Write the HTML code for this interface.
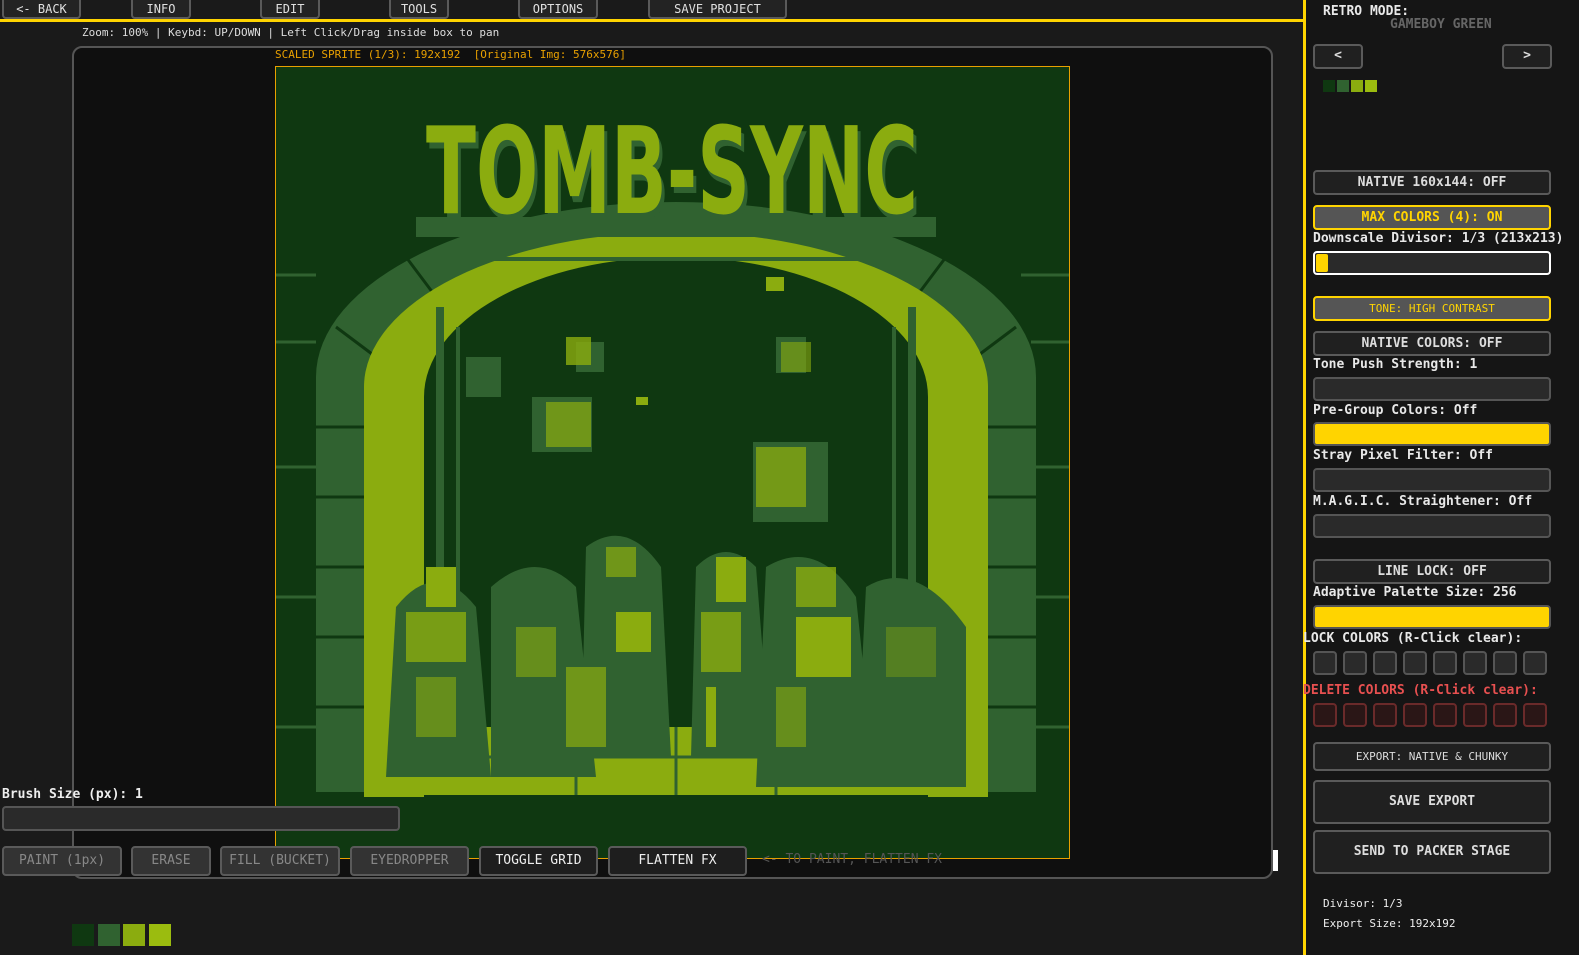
<!DOCTYPE html>
<html><head><meta charset="utf-8"><style>
*{box-sizing:border-box;margin:0;padding:0}
body{width:1579px;height:955px;background:#1a1a1a;position:relative;overflow:hidden;font-family:"DejaVu Sans Mono","Liberation Mono",monospace;color:#ddd}
.a{position:absolute}
.tb{position:absolute;top:-4px;height:23px;background:#232323;border:2px solid #5a5a5a;border-radius:4px;color:#e0e0e0;font-size:12px;text-align:center;line-height:21px;padding-top:1px}
.btn{position:absolute;left:1313px;width:238px;background:#202020;border:2px solid #5a5a5a;border-radius:4px;color:#ddd;font-size:13px;font-weight:bold;text-align:center}
.bar{position:absolute;left:1313px;width:238px;height:24px;background:#2a2a2a;border:2px solid #555;border-radius:4px}
.yb{background:#ffd400;border-color:#555}
.lbl{position:absolute;left:1313px;font-size:13px;font-weight:bold;color:#e8e8e8;white-space:nowrap}
.sq{position:absolute;width:24px;height:24px;border:2px solid #555;background:#2a2a2a;border-radius:4px}
.rq{border-color:#6a2a2a;background:#2a1616}
.lb{position:absolute;top:846px;height:30px;background:#333;border:2px solid #5a5a5a;border-radius:4px;color:#888;font-size:13px;text-align:center;line-height:26px}
</style></head><body>
<div class="tb" style="left:2px;width:79px">&lt;- BACK</div>
<div class="tb" style="left:131px;width:60px">INFO</div>
<div class="tb" style="left:260px;width:60px">EDIT</div>
<div class="tb" style="left:389px;width:60px">TOOLS</div>
<div class="tb" style="left:518px;width:80px">OPTIONS</div>
<div class="tb" style="left:648px;width:139px">SAVE PROJECT</div>
<div class="a" style="left:0;top:19px;width:1304px;height:3px;background:#ffd400"></div>
<div class="a" style="left:82px;top:26px;font-size:11px;color:#ddd;white-space:nowrap">Zoom: 100% | Keybd: UP/DOWN | Left Click/Drag inside box to pan</div>
<div class="a" style="left:72px;top:46px;width:1201px;height:833px;background:#0f0f0f;border:2px solid #555;border-radius:10px"></div>
<div class="a" style="left:275px;top:48px;font-size:11px;color:#e8a000;white-space:nowrap">SCALED SPRITE (1/3): 192x192&nbsp;&nbsp;[Original Img: 576x576]</div>
<div class="a" style="left:275px;top:66px;width:795px;height:793px;background:#0f3811;border:1px solid #e8a000;overflow:hidden">
<svg width="793" height="791" viewBox="0 0 793 791" style="position:absolute;left:0;top:0">
<g stroke="#306230" stroke-width="3">
<line x1="0" y1="208" x2="40" y2="208"/><line x1="0" y1="275" x2="40" y2="275"/><line x1="0" y1="400" x2="40" y2="400"/><line x1="0" y1="530" x2="40" y2="530"/><line x1="0" y1="660" x2="40" y2="660"/>
<line x1="745" y1="208" x2="793" y2="208"/><line x1="755" y1="275" x2="793" y2="275"/><line x1="760" y1="400" x2="793" y2="400"/><line x1="760" y1="530" x2="793" y2="530"/><line x1="760" y1="660" x2="793" y2="660"/>
</g>
<path d="M40,725 L40,310 A360,175 0 0 1 760,310 L760,725 Z" fill="#306230"/>
<g stroke="#0f3811" stroke-width="3">
<line x1="40" y1="360" x2="90" y2="360"/><line x1="40" y1="430" x2="90" y2="430"/><line x1="40" y1="500" x2="90" y2="500"/><line x1="40" y1="570" x2="90" y2="570"/><line x1="40" y1="640" x2="90" y2="640"/>
<line x1="710" y1="360" x2="760" y2="360"/><line x1="710" y1="430" x2="760" y2="430"/><line x1="710" y1="500" x2="760" y2="500"/><line x1="710" y1="570" x2="760" y2="570"/><line x1="710" y1="640" x2="760" y2="640"/>
<line x1="60" y1="260" x2="100" y2="290"/><line x1="700" y1="290" x2="740" y2="260"/><line x1="130" y1="190" x2="160" y2="230"/><line x1="640" y1="230" x2="670" y2="190"/>
</g>
<path d="M88,730 L88,320 A312,155 0 0 1 712,320 L712,730 Z" fill="#8bac0f"/>
<path d="M148,730 L148,330 A252,140 0 0 1 652,330 L652,730 Z" fill="#0f3811"/>
<rect x="210" y="190" width="380" height="4" fill="#306230"/>
<rect x="160" y="240" width="8" height="460" fill="#306230"/><rect x="632" y="240" width="8" height="460" fill="#306230"/>
<rect x="180" y="260" width="4" height="420" fill="#306230"/><rect x="616" y="260" width="4" height="420" fill="#306230"/>
<g fill="#306230"><rect x="300" y="275" width="28" height="30"/><rect x="256" y="330" width="60" height="55"/><rect x="477" y="375" width="75" height="80"/><rect x="500" y="270" width="30" height="36"/><rect x="190" y="290" width="35" height="40"/></g>
<g fill="#8bac0f"><rect x="290" y="270" width="25" height="28" opacity=".8"/><rect x="270" y="335" width="45" height="45" opacity=".7"/><rect x="480" y="380" width="50" height="60" opacity=".75"/><rect x="505" y="275" width="30" height="30" opacity=".6"/><rect x="360" y="330" width="12" height="8"/><rect x="490" y="210" width="18" height="14"/></g>
<rect x="148" y="660" width="504" height="68" fill="#8bac0f"/>
<g stroke="#306230" stroke-width="3"><line x1="148" y1="690" x2="652" y2="690"/><line x1="300" y1="660" x2="300" y2="728"/><line x1="400" y1="660" x2="400" y2="728"/><line x1="500" y1="660" x2="500" y2="728"/></g>
<g fill="#306230">
<path d="M120,540 Q160,490 200,540 L215,710 L110,710 Z"/>
<path d="M215,520 Q260,480 300,520 L320,710 L215,710 Z"/>
<path d="M310,480 Q350,450 385,500 L395,690 L305,690 Z"/>
<path d="M420,500 Q450,470 480,500 L495,690 L415,690 Z"/>
<path d="M490,500 Q540,470 580,530 L600,720 L480,720 Z"/>
<path d="M590,520 Q640,490 690,560 L690,720 L580,720 Z"/>
</g>
<g fill="#8bac0f">
<rect x="150" y="500" width="30" height="40"/><rect x="130" y="545" width="60" height="50" opacity=".8"/><rect x="140" y="610" width="40" height="60" opacity=".6"/>
<rect x="240" y="560" width="40" height="50" opacity=".6"/><rect x="290" y="600" width="40" height="80" opacity=".7"/>
<rect x="330" y="480" width="30" height="30" opacity=".7"/><rect x="340" y="545" width="35" height="40"/>
<rect x="440" y="490" width="30" height="45"/><rect x="425" y="545" width="40" height="60" opacity=".8"/><rect x="430" y="620" width="10" height="60"/>
<rect x="520" y="500" width="40" height="40" opacity=".8"/><rect x="520" y="550" width="55" height="60"/><rect x="500" y="620" width="30" height="60" opacity=".6"/>
<rect x="610" y="560" width="50" height="50" opacity=".4"/>
</g>
<rect x="140" y="150" width="520" height="20" fill="#306230"/>
<g font-family="DejaVu Sans Condensed, Liberation Sans Narrow, sans-serif" font-weight="bold" font-size="120">
<text x="153" y="152" fill="#306230" textLength="492" lengthAdjust="spacingAndGlyphs">TOMB-SYNC</text>
<text x="150" y="146" fill="#8bac0f" textLength="492" lengthAdjust="spacingAndGlyphs">TOMB-SYNC</text>
</g>
</svg></div>
<div class="a" style="left:2px;top:787px;font-size:13px;font-weight:bold;color:#eee">Brush Size (px): 1</div>
<div class="a" style="left:2px;top:806px;width:398px;height:25px;background:#2a2a2a;border:2px solid #555;border-radius:4px"></div>
<div class="lb" style="left:2px;width:120px">PAINT (1px)</div>
<div class="lb" style="left:131px;width:80px">ERASE</div>
<div class="lb" style="left:220px;width:120px">FILL (BUCKET)</div>
<div class="lb" style="left:350px;width:119px">EYEDROPPER</div>
<div class="lb" style="left:479px;width:119px;background:#1e1e1e;color:#eee">TOGGLE GRID</div>
<div class="lb" style="left:608px;width:139px;background:#1e1e1e;color:#eee">FLATTEN FX</div>
<div class="a" style="left:762px;top:852px;font-size:13px;color:#555;white-space:nowrap">&lt;- TO PAINT, FLATTEN FX</div>
<div class="a" style="left:1273px;top:850px;width:5px;height:21px;background:#fff"></div>
<div class="a" style="left:72px;top:924px;width:22px;height:22px;background:#0f3811"></div>
<div class="a" style="left:98px;top:924px;width:22px;height:22px;background:#306230"></div>
<div class="a" style="left:123px;top:924px;width:22px;height:22px;background:#8bac0f"></div>
<div class="a" style="left:149px;top:924px;width:22px;height:22px;background:#9bbc0f"></div>
<div class="a" style="left:1303px;top:0;width:276px;height:955px;background:#151515;border-left:3px solid #ffd400"></div>
<div class="lbl" style="left:1323px;top:4px">RETRO MODE:</div>
<div class="a" style="left:1390px;top:17px;font-size:13px;font-weight:bold;color:#666">GAMEBOY GREEN</div>
<div class="btn" style="width:50px;top:44px;height:25px;line-height:20px">&lt;</div>
<div class="btn" style="left:1502px;width:50px;top:44px;height:25px;line-height:20px">&gt;</div>
<div class="a" style="left:1323px;top:80px;width:12px;height:12px;background:#0f3811"></div>
<div class="a" style="left:1337px;top:80px;width:12px;height:12px;background:#306230"></div>
<div class="a" style="left:1351px;top:80px;width:12px;height:12px;background:#8bac0f"></div>
<div class="a" style="left:1365px;top:80px;width:12px;height:12px;background:#9bbc0f"></div>
<div class="btn" style="top:170px;height:25px;line-height:21px">NATIVE 160x144: OFF</div>
<div class="btn" style="top:205px;height:25px;line-height:21px;background:#555;border-color:#ffd400;color:#ffd400">MAX COLORS (4): ON</div>
<div class="lbl" style="top:231px">Downscale Divisor: 1/3 (213x213)</div>
<div class="bar" style="top:251px;border-color:#fff"><div style="position:absolute;left:1px;top:1px;width:12px;height:18px;background:#ffd400;border-radius:2px"></div></div>
<div class="btn" style="top:296px;height:25px;line-height:21px;background:#555;border-color:#ffd400;color:#ffd400;font-size:11px;font-weight:normal">TONE: HIGH CONTRAST</div>
<div class="btn" style="top:331px;height:25px;line-height:21px">NATIVE COLORS: OFF</div>
<div class="lbl" style="top:357px">Tone Push Strength: 1</div>
<div class="bar" style="top:377px"></div>
<div class="lbl" style="top:403px">Pre-Group Colors: Off</div>
<div class="bar yb" style="top:422px"></div>
<div class="lbl" style="top:448px">Stray Pixel Filter: Off</div>
<div class="bar" style="top:468px"></div>
<div class="lbl" style="top:494px">M.A.G.I.C. Straightener: Off</div>
<div class="bar" style="top:514px"></div>
<div class="btn" style="top:559px;height:25px;line-height:21px">LINE LOCK: OFF</div>
<div class="lbl" style="top:585px">Adaptive Palette Size: 256</div>
<div class="bar yb" style="top:605px"></div>
<div class="lbl" style="left:1303px;top:631px">LOCK COLORS (R-Click clear):</div>
<div class="sq" style="left:1313px;top:651px"></div><div class="sq" style="left:1343px;top:651px"></div><div class="sq" style="left:1373px;top:651px"></div><div class="sq" style="left:1403px;top:651px"></div><div class="sq" style="left:1433px;top:651px"></div><div class="sq" style="left:1463px;top:651px"></div><div class="sq" style="left:1493px;top:651px"></div><div class="sq" style="left:1523px;top:651px"></div>
<div class="lbl" style="left:1303px;top:683px;color:#e85050">DELETE COLORS (R-Click clear):</div>
<div class="sq rq" style="left:1313px;top:703px"></div><div class="sq rq" style="left:1343px;top:703px"></div><div class="sq rq" style="left:1373px;top:703px"></div><div class="sq rq" style="left:1403px;top:703px"></div><div class="sq rq" style="left:1433px;top:703px"></div><div class="sq rq" style="left:1463px;top:703px"></div><div class="sq rq" style="left:1493px;top:703px"></div><div class="sq rq" style="left:1523px;top:703px"></div>
<div class="btn" style="top:742px;height:29px;line-height:25px;font-size:11px;font-weight:normal">EXPORT: NATIVE &amp; CHUNKY</div>
<div class="btn" style="top:780px;height:44px;line-height:40px">SAVE EXPORT</div>
<div class="btn" style="top:830px;height:44px;line-height:40px">SEND TO PACKER STAGE</div>
<div class="a" style="left:1323px;top:897px;font-size:11px;color:#eee">Divisor: 1/3</div>
<div class="a" style="left:1323px;top:917px;font-size:11px;color:#eee">Export Size: 192x192</div>
</body></html>
